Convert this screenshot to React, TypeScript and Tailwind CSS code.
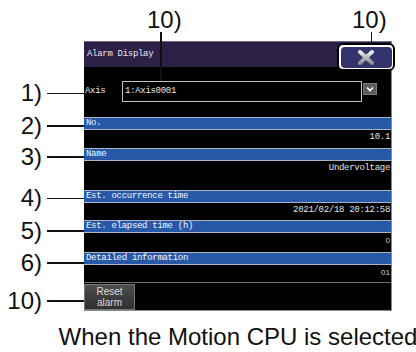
import React from "react";

function Bar({ label }: { label: string }) {
  return (
    <div className="h-[13px] bg-[#2858a8] border-y border-[#a9b4c6] text-[#f2f6ff] flex items-center pl-[2px] leading-none">
      {label}
    </div>
  );
}

function Value({ h, text, small }: { h: string; text: string; small?: boolean }) {
  return (
    <div className={`${h} flex justify-end items-start pr-[1px] text-[#e4e4e4] leading-none`}>
      {small ? (
        <span className="pt-[4px] text-[8px] font-[family-name:'Liberation_Sans',Arial,sans-serif] tracking-normal text-[#d0d0d0]">{text}</span>
      ) : (
        <span className="pt-[3px]">{text}</span>
      )}
    </div>
  );
}

function Screen() {
  return (
    <div className="relative w-[308px] h-[270px] bg-black flex flex-col border-r border-b border-[#8a8a8a] font-[family-name:'Liberation_Mono',monospace] text-[9px] tracking-[-0.3px]">
      <div className="h-[26px] shrink-0 bg-[#2c2047] border-t border-[#6f6a80] flex items-center pl-[3px] text-[#e8e6f2] leading-none">
        Alarm Display
      </div>
      <div className="h-[50px] shrink-0 flex items-start pt-[14px] text-[#e8e8e8] leading-none">
        <div className="w-[38px] h-[21px] flex items-center pl-[1px]">Axis</div>
        <div className="w-[240px] h-[21px] border border-[#c4c4c4] flex items-center pl-[2px]">1:Axis0001</div>
        <div className="ml-[1px] mt-[2px] w-[14px] h-[12px] bg-[#5c5c5c] border border-[#7a7a7a] flex items-center justify-center">
          <svg width="8" height="6" viewBox="0 0 8 6">
            <path d="M1 1.5 L4 4.5 L7 1.5" stroke="#ffffff" strokeWidth="1.6" fill="none" />
          </svg>
        </div>
      </div>
      <Bar label="No." />
      <Value h="h-[18px]" text="10.1" />
      <Bar label="Name" />
      <Value h="h-[29px]" text="Undervoltage" />
      <Bar label="Est. occurrence time" />
      <Value h="h-[17px]" text="2021/02/18 20:12:58" />
      <Bar label="Est. elapsed time (h)" />
      <Value h="h-[19px]" text="0" small />
      <Bar label="Detailed information" />
      <Value h="h-[17px]" text="01" small />
      <div className="flex-1 border-t border-[#6e6e6e] flex pt-px">
        <div className="w-[51px] h-full bg-gradient-to-b from-[#4d4d4d] to-[#2f2f2f] border border-[#777777] flex flex-col items-center justify-center font-[family-name:'Liberation_Sans',Arial,sans-serif] text-[10px] leading-[11px] tracking-normal text-[#dcdcdc]">
          <span>Reset</span>
          <span>alarm</span>
        </div>
      </div>
      <div className="absolute left-[253px] top-[2px] w-[58px] h-[28px] rounded-[6px] border-2 border-black bg-white p-[1.5px]">
        <div className="w-full h-full rounded-[4px] bg-[#33346e] flex items-center justify-center">
          <svg width="18" height="15" viewBox="0 0 18 15">
            <defs>
              <linearGradient id="xg" x1="0" y1="0" x2="0" y2="1">
                <stop offset="0" stopColor="#e8e8e8" />
                <stop offset="1" stopColor="#8e8e8e" />
              </linearGradient>
            </defs>
            <path d="M3 2 L15 13 M15 2 L3 13" stroke="url(#xg)" strokeWidth="4" strokeLinecap="round" fill="none" />
          </svg>
        </div>
      </div>
    </div>
  );
}

export default function App() {
  return (
    <div className="relative w-[416px] h-[352px] bg-white overflow-hidden font-[family-name:'Liberation_Sans',Arial,sans-serif] text-black">
      <div className="pl-[84px] pt-[41px]">
        <Screen />
        <div className="w-[308px] mt-[14px] flex justify-center whitespace-nowrap text-[24px] leading-[24px] text-[#111]">
          When the Motion CPU is selected
        </div>
      </div>

      {/* top callouts */}
      <div className="absolute left-[147px] top-[8px] text-[24px] leading-[24px] text-[#111]">10)</div>
      <div className="absolute left-[160px] top-[32px] w-[1.5px] h-[49px] bg-[#111]" />
      <div className="absolute left-[352px] top-[8px] text-[24px] leading-[24px] text-[#111]">10)</div>
      <div className="absolute left-[370.5px] top-[32px] w-[1.5px] h-[12px] bg-[#111]" />

      {/* left callouts */}
      <div className="absolute left-0 top-[81px] w-[42px] text-right text-[24px] leading-[24px] text-[#111]">1)</div>
      <div className="absolute left-[47px] top-[92.5px] w-[37px] h-[1.5px] bg-[#111]" />
      <div className="absolute left-0 top-[113.5px] w-[42px] text-right text-[24px] leading-[24px] text-[#111]">2)</div>
      <div className="absolute left-[47px] top-[125px] w-[37px] h-[1.5px] bg-[#111]" />
      <div className="absolute left-0 top-[144.5px] w-[42px] text-right text-[24px] leading-[24px] text-[#111]">3)</div>
      <div className="absolute left-[47px] top-[156px] w-[37px] h-[1.5px] bg-[#111]" />
      <div className="absolute left-0 top-[186px] w-[42px] text-right text-[24px] leading-[24px] text-[#111]">4)</div>
      <div className="absolute left-[47px] top-[197.5px] w-[37px] h-[1.5px] bg-[#111]" />
      <div className="absolute left-0 top-[218.5px] w-[42px] text-right text-[24px] leading-[24px] text-[#111]">5)</div>
      <div className="absolute left-[47px] top-[230px] w-[37px] h-[1.5px] bg-[#111]" />
      <div className="absolute left-0 top-[250.5px] w-[42px] text-right text-[24px] leading-[24px] text-[#111]">6)</div>
      <div className="absolute left-[47px] top-[262px] w-[37px] h-[1.5px] bg-[#111]" />
      <div className="absolute left-0 top-[288.5px] w-[42px] text-right text-[24px] leading-[24px] text-[#111]">10)</div>
      <div className="absolute left-[47px] top-[300px] w-[37px] h-[1.5px] bg-[#111]" />
    </div>
  );
}
